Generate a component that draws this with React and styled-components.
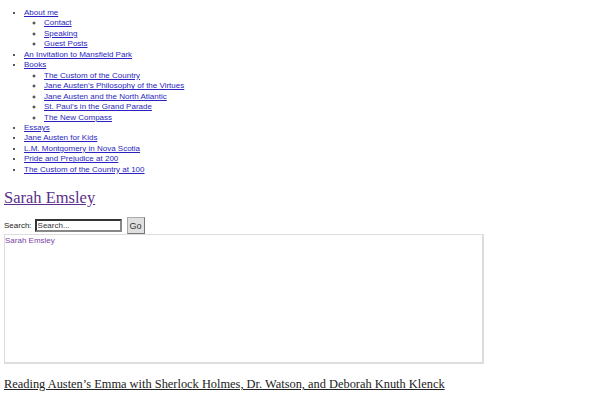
import React from "react";
import styled, { createGlobalStyle } from "styled-components";

const GlobalStyle = createGlobalStyle`
  body {
    margin: 0;
    padding: 4px;
    background: #fff;
    font-family: "Liberation Sans", Arial, sans-serif;
    font-size: 8px;
    color: #222;
  }
`;

const Menu = styled.ul`
  margin: ${props => (props.nested ? "0" : "4px 0 8px")};
  padding-left: 20px;
  list-style-type: ${props => (props.nested ? "circle" : "disc")};
  font-size: 8px;
  line-height: 10.45px;
`;

const MenuLink = styled.a`
  color: #2a1fc0;
  text-decoration: underline;
`;

const SiteTitle = styled.a`
  display: block;
  width: fit-content;
  margin: 13px 0 9px;
  font-family: "Liberation Serif", "Times New Roman", serif;
  font-size: 16.5px;
  color: #5a2e8a;
  text-decoration: underline;
`;

const SearchForm = styled.form`
  display: flex;
  align-items: center;
  gap: 3px;
  font-size: 8px;
  height: 17px;
  color: #222;
`;

const SearchInput = styled.input`
  box-sizing: border-box;
  width: 87px;
  height: 13px;
  padding: 0 1px;
  border: 2px inset #888;
  font-family: "Liberation Sans", Arial, sans-serif;
  font-size: 8px;
  color: #333;
`;

const GoButton = styled.button`
  box-sizing: border-box;
  height: 17px;
  width: 18px;
  padding: 0;
  margin-left: 2px;
  border: 1px solid #aaa;
  border-right-color: #777;
  border-bottom-color: #777;
  background: #e0e0e0;
  font-family: "Liberation Sans", Arial, sans-serif;
  font-size: 9px;
  color: #333;
`;

const Frame = styled.div`
  box-sizing: border-box;
  width: 480px;
  height: 130px;
  border: 1px solid #ddd;
  border-right-width: 2px;
  border-bottom-width: 2px;
  padding: 1px 0 0 0;
`;

const FrameLink = styled.a`
  color: #7b3fa8;
  text-decoration: none;
  font-size: 8px;
`;

const PostTitle = styled.a`
  display: block;
  width: fit-content;
  margin-top: 13px;
  font-family: "Liberation Serif", "Times New Roman", serif;
  font-size: 12.4px;
  color: #222;
  text-decoration: underline;
`;

const menu = [
  { label: "About me", children: ["Contact", "Speaking", "Guest Posts"] },
  { label: "An Invitation to Mansfield Park" },
  {
    label: "Books",
    children: [
      "The Custom of the Country",
      "Jane Austen\u2019s Philosophy of the Virtues",
      "Jane Austen and the North Atlantic",
      "St. Paul\u2019s in the Grand Parade",
      "The New Compass",
    ],
  },
  { label: "Essays" },
  { label: "Jane Austen for Kids" },
  { label: "L.M. Montgomery in Nova Scotia" },
  { label: "Pride and Prejudice at 200" },
  { label: "The Custom of the Country at 100" },
];

export default function App() {
  return (
    <>
      <GlobalStyle />
      <Menu>
        {menu.map(item => (
          <li key={item.label}>
            <MenuLink href="#">{item.label}</MenuLink>
            {item.children && (
              <Menu nested>
                {item.children.map(child => (
                  <li key={child}>
                    <MenuLink href="#">{child}</MenuLink>
                  </li>
                ))}
              </Menu>
            )}
          </li>
        ))}
      </Menu>
      <SiteTitle href="#">Sarah Emsley</SiteTitle>
      <SearchForm onSubmit={e => e.preventDefault()}>
        <label>Search:</label>
        <SearchInput defaultValue="Search..." />
        <GoButton type="submit">Go</GoButton>
      </SearchForm>
      <Frame>
        <FrameLink href="#">Sarah Emsley</FrameLink>
      </Frame>
      <PostTitle href="#">
        Reading Austen’s Emma with Sherlock Holmes, Dr. Watson, and Deborah Knuth Klenck
      </PostTitle>
    </>
  );
}
